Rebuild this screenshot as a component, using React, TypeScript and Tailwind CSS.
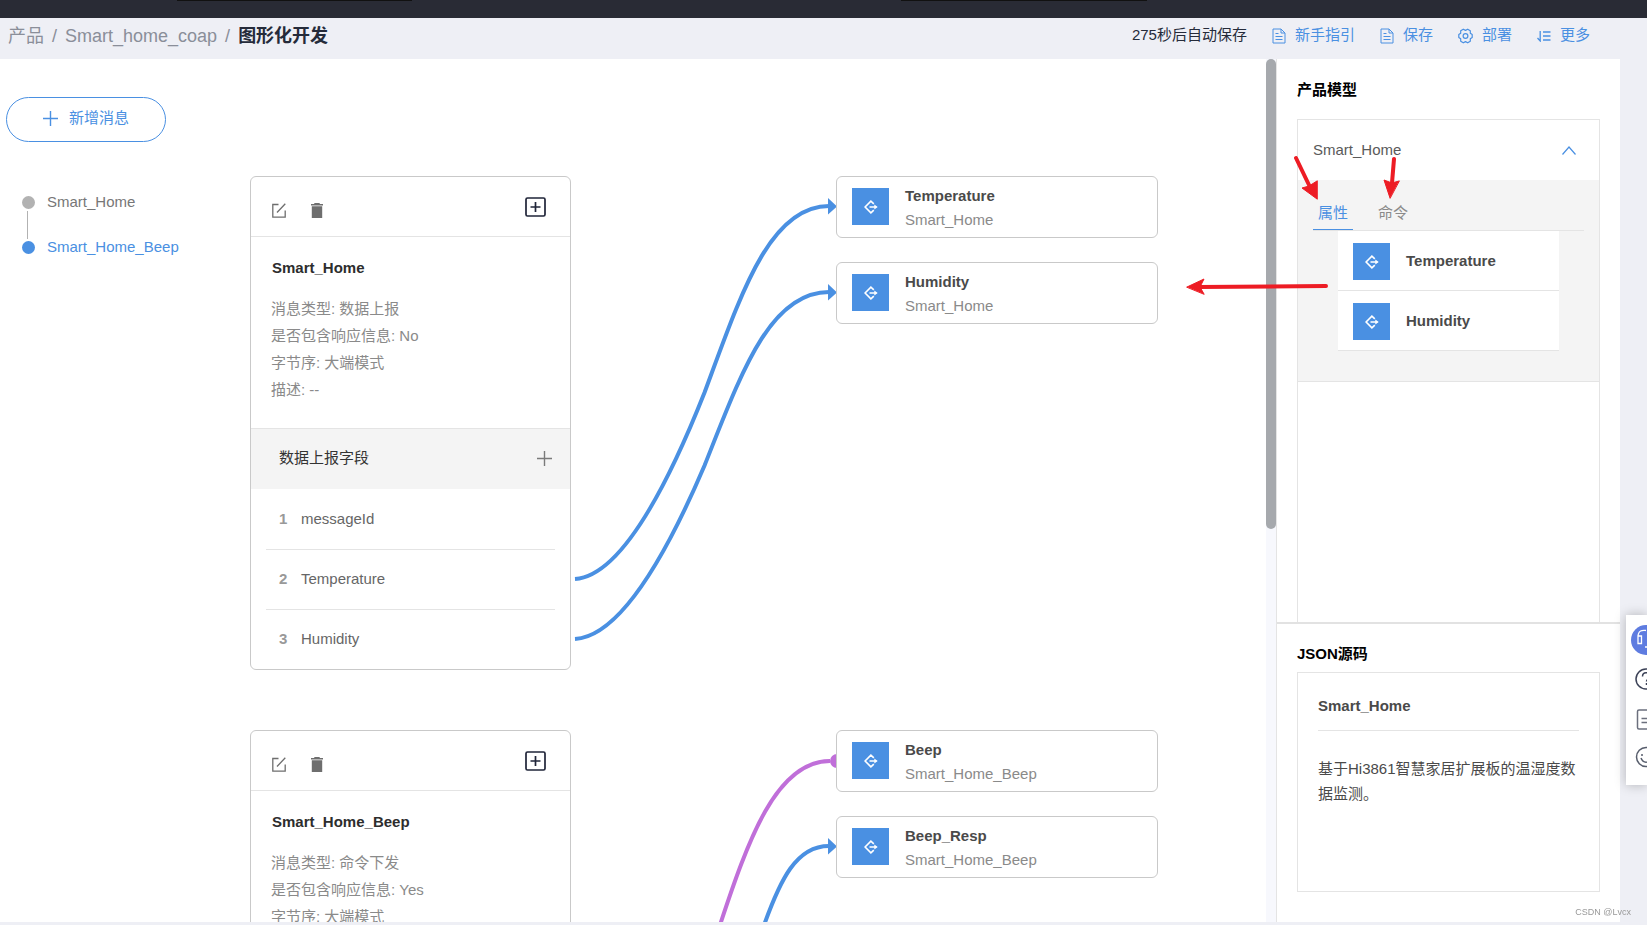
import { useState } from "react";

type Point = { x: number; y: number };

type Card = {
    name: string;
    pos: Point;
    info: string[];
    section?: string;
    fields?: string[];
};

const actions = [
    { name: "新手指引", icon: <DocIcon /> },
    { name: "保存", icon: <DocIcon /> },
    { name: "部署", icon: <GearIcon /> },
    { name: "更多", icon: <SortIcon /> },
];

const messages = ["Smart_Home", "Smart_Home_Beep"];

const cards: Card[] = [
    {
        name: "Smart_Home",
        pos: { x: 250, y: 117 },
        info: ["消息类型: 数据上报", "是否包含响应信息: No", "字节序: 大端模式", "描述: --"],
        section: "数据上报字段",
        fields: ["messageId", "Temperature", "Humidity"],
    },
    {
        name: "Smart_Home_Beep",
        pos: { x: 250, y: 671 },
        info: ["消息类型: 命令下发", "是否包含响应信息: Yes", "字节序: 大端模式"],
    },
];

const targets = [
    { name: "Temperature", service: "Smart_Home", pos: { x: 836, y: 117 } },
    { name: "Humidity", service: "Smart_Home", pos: { x: 836, y: 203 } },
    { name: "Beep", service: "Smart_Home_Beep", pos: { x: 836, y: 671 } },
    { name: "Beep_Resp", service: "Smart_Home_Beep", pos: { x: 836, y: 757 } },
];

const properties = ["Temperature", "Humidity"];

// S-shaped connector from a field to a property
const linkPath = (from: Point, to: Point) => {
    const dx = to.x - from.x;
    const dy = to.y - from.y;
    const mx = from.x + dx * 0.51;
    const my = from.y + dy * 0.5;
    return `M${from.x} ${from.y} Q${from.x + 57} ${from.y + dy * 0.01} ${mx} ${my} C${mx + 36} ${my + dy * 0.26} ${to.x - 60} ${to.y} ${to.x} ${to.y}`;
};

/* ============ ICONS ============ */
function DocIcon() {
    return (
        <svg width="14" height="16" viewBox="0 0 14 16" fill="none" stroke="currentColor">
            <path d="M9 1H1v14h12V5L9 1v4h4" />
            <path d="M3.500 5.500h3M3.500 8.500h7M3.500 11.500h7" />
        </svg>
    );
}

function GearIcon() {
    return (
        <svg width="15" height="16" viewBox="0 0 15 16" fill="none" stroke="currentColor" strokeWidth="1.2">
            <path d="M5.3 1.2 7.5 2.4 9.7 1.2 12.3 2.8V5.2L14.2 6.6V9.4L12.3 10.8V13.2L9.7 14.8 7.5 13.6 5.3 14.8 2.7 13.2V10.8L.8 9.4V6.6L2.7 5.2V2.8Z" strokeLinejoin="round" />
            <circle cx="7.5" cy="8" r="2.4" />
        </svg>
    );
}

function SortIcon() {
    return (
        <svg width="14" height="12" viewBox="0 0 14 12" fill="none" stroke="currentColor" strokeWidth="1.3">
            <path d="M3.2 1v10L.5 8M6 2h7.5M6 6h7.5M6 10h7.5" />
        </svg>
    );
}

function PlusIcon() {
    return (
        <svg width="15" height="15" viewBox="0 0 15 15" fill="none" stroke="currentColor" strokeWidth="1.4">
            <path d="M7.5 0v15M0 7.5h15" />
        </svg>
    );
}

function PropertyIcon() {
    return (
        <span className="flex size-[37px] shrink-0 items-center justify-center bg-[#4a90e2] text-white">
            <svg width="14" height="14" viewBox="0 0 14 14" fill="none" stroke="currentColor" strokeWidth="1.6">
                <path d="M9.8 3.8 6.9 1.1 1.1 7l5.8 5.9 2.9-2.7M5.5 7h7" />
                <path d="M10.3 4.4 13.7 7l-3.4 2.6z" fill="currentColor" stroke="none" />
            </svg>
        </span>
    );
}

/* ============ CANVAS NODES ============ */
function MessageCard({ card }: { card: Card }) {
    return (
        <section
            className="absolute min-h-[494px] w-[321px] rounded-md border border-[#c9c9c9] bg-white"
            style={{ left: card.pos.x, top: card.pos.y }}
        >
            <div className="flex h-[60px] items-center border-b border-[#e4e4e4] pr-6 pl-[21px] text-[#6e6e6e]">
                <button aria-label="编辑" className="mt-2">
                    <svg width="14" height="15" viewBox="0 0 14 15" fill="none" stroke="currentColor" strokeWidth="1.3">
                        <path d="M6.5 1.5H.8v12.7h12.4V7.5M5 9.5l8.3-8.7" />
                    </svg>
                </button>
                <button aria-label="删除" className="mt-2 ml-[25px]">
                    <svg width="12" height="15" viewBox="0 0 12 15" fill="currentColor">
                        <path d="M3.3 0h5.4v1H12v1.6H0V1h3.3zM.8 3.2h10.4V15H.8z" />
                    </svg>
                </button>
                <button aria-label="添加" className="ml-auto text-[#1f2438]">
                    <svg width="21" height="20" viewBox="0 0 21 20" fill="none" stroke="currentColor" strokeWidth="1.7">
                        <rect x="1" y="1" width="19" height="18" rx="1.5" />
                        <path d="M10.5 5v10M5.5 10h10" />
                    </svg>
                </button>
            </div>

            <div className="px-5 pt-[21px] pb-[25px]">
                <h2 className="pl-px leading-5 font-bold text-[#2d2d2d]">{card.name}</h2>
                <div className="mt-[17px] leading-[27px] text-[#8a8a8a]">
                    {card.info.map((line) => (
                        <p key={line}>{line}</p>
                    ))}
                </div>
            </div>

            {card.section && (
                <div className="flex h-[61px] items-center justify-between border-t border-[#e4e4e4] bg-[#f4f4f4] pr-[18px] pb-px pl-7">
                    <h3 className="text-[#333]">{card.section}</h3>
                    <button aria-label="添加字段" className="text-[#7a7a7a]">
                        <PlusIcon />
                    </button>
                </div>
            )}

            {card.fields && (
                <ol className="px-[15px]">
                    {card.fields.map((field, i) => (
                        <li
                            key={field}
                            className="flex h-[60px] items-center border-t border-[#e4e4e4] pl-[13px] text-[#666] first:border-transparent"
                        >
                            <b className="w-[22px] text-[#999]">{i + 1}</b>
                            {field}
                        </li>
                    ))}
                </ol>
            )}
        </section>
    );
}

function TargetCard({ target }: { target: (typeof targets)[number] }) {
    return (
        <div
            className="absolute flex h-[62px] w-[322px] items-center gap-4 rounded-md border border-[#c9c9c9] bg-white px-[15px] pb-px"
            style={{ left: target.pos.x, top: target.pos.y }}
        >
            <PropertyIcon />
            <div className="pt-0.5 leading-6">
                <p className="font-bold text-[#4a4a4a]">{target.name}</p>
                <p className="text-[#8a8a8a]">{target.service}</p>
            </div>
        </div>
    );
}

function Links() {
    return (
        <svg className="absolute inset-0 size-full" fill="none" strokeWidth="4">
            <g stroke="#4a90e2">
                <path d={linkPath({ x: 575, y: 520 }, { x: 829, y: 147 })} />
                <path d={linkPath({ x: 575, y: 580 }, { x: 829, y: 233 })} />
                <path d="M763 869C780 821 796 787 829 787" />
            </g>
            <path d="M719 869C748 781 776 702 830 702" stroke="#c06fd9" />
            <circle cx="837" cy="702" r="7" fill="#c06fd9" />
            <path d="M828 139l9 8.500-9 8zM828 225l9 8.500-9 8zM828 779l9 8.500-9 8z" fill="#4a90e2" />
        </svg>
    );
}

/* ============ RIGHT PANEL ============ */
function ProductPanel() {
    const [tab, setTab] = useState("属性");

    return (
        <aside className="relative flex w-[344px] shrink-0 flex-col border-l border-[#e4e4e4] bg-white">
            <div className="flex min-h-0 flex-1 flex-col border-b-2 border-[#e2e2e2] px-5 pt-[21px]">
                <h2 className="leading-5 font-bold text-black">产品模型</h2>
                <div className="mt-[19px] flex-1 border border-b-0 border-[#e4e4e4]">
                    <button className="flex h-[60px] w-full items-center justify-between pr-[23px] pl-[15px] text-[#5a5a5a]">
                        Smart_Home
                        <svg width="14" height="9" viewBox="0 0 14 9" fill="none" stroke="#4a90e2" strokeWidth="1.2">
                            <path d="M.5 8.500 7 1l6.500 7.500" />
                        </svg>
                    </button>
                    <div className="border-b border-[#e4e4e4] bg-[#f4f4f4] pt-4 pb-[30px]">
                        <div className="mx-[15px] flex gap-5 border-b border-[#e4e4e4]">
                            {["属性", "命令"].map((name) => (
                                <button
                                    key={name}
                                    onClick={() => setTab(name)}
                                    className={
                                        tab === name
                                            ? "h-[34px] border-b border-[#4a90e2] px-[5px] pt-0.5 text-[#4a90e2]"
                                            : "h-[34px] border-b border-transparent px-[5px] pt-0.5 text-[#8a8a8a]"
                                    }
                                >
                                    {name}
                                </button>
                            ))}
                        </div>
                        <ul className="mx-10">
                            {properties.map((name) => (
                                <li
                                    key={name}
                                    className="flex h-[60px] items-center gap-4 border-b border-[#e4e4e4] bg-white px-[15px] pt-0.5 font-bold text-[#4a4a4a]"
                                >
                                    <PropertyIcon />
                                    {name}
                                </li>
                            ))}
                        </ul>
                    </div>
                </div>
            </div>

            <div className="px-5 pt-5 pb-[30px]">
                <h2 className="leading-5 font-bold text-black">JSON源码</h2>
                <div className="mt-2 h-[220px] border border-[#e4e4e4] px-5">
                    <h3 className="border-b border-[#e4e4e4] pt-[23px] pb-[14px] leading-5 font-bold text-[#4a4a4a]">
                        Smart_Home
                    </h3>
                    <p className="mt-[25px] leading-[25px] text-[#4a4a4a]">
                        基于Hi3861智慧家居扩展板的温湿度数据监测。
                    </p>
                </div>
            </div>

            {/* Hint arrows */}
            <svg
                className="pointer-events-none absolute top-0 -left-[97px]"
                width="240"
                height="250"
                viewBox="-96 0 240 250"
                stroke="#ed1c24"
                strokeWidth="4"
                strokeLinecap="round"
            >
                <path d="M20 99l13 27M118 100l-2 24M50 227l-128 1" />
                <path
                    d="M41 140l-15-11 7-2 8-5zM114 139l-6-18 8 3 7-2zM-89 228l17-8-4 8 4 7z"
                    fill="#ed1c24"
                    strokeWidth="1"
                />
            </svg>
        </aside>
    );
}

function HelpDock() {
    return (
        <div className="fixed top-[615px] right-0 h-[170px] w-[21px] bg-white shadow-[0_0_12px_rgba(0,0,0,0.25)]">
            <svg width="21" height="170" viewBox="0 0 21 170" fill="none" stroke="#3c4257" strokeWidth="1.5">
                <circle cx="20" cy="25" r="15" fill="#5e7ce0" stroke="none" />
                <path d="M12 22c0-8 6-6.500 8-6.500M12 21v7.500h3.500V21zM19 32h4" stroke="#fff" strokeWidth="1.3" />
                <circle cx="20" cy="64" r="10" />
                <path d="M16.500 61.500c0-5 7-5 7 0 0 2.500-3 2.500-3 5M20.500 68v2" />
                <rect x="11.500" y="95" width="18" height="19" rx="1.500" stroke="#6b6f7d" />
                <path d="M15.500 103.500h10M15.500 107.500h10" stroke="#6b6f7d" />
                <circle cx="20" cy="142" r="9.500" stroke="#575d6c" />
                <path d="M15 143c2 5.500 8 5.500 10 0M16 139v2" stroke="#575d6c" />
            </svg>
        </div>
    );
}

const App = () => {
    const [active, setActive] = useState("Smart_Home_Beep");

    return (
        <div className="flex h-screen flex-col overflow-hidden bg-[#eeeff5] pb-[3px] font-['Liberation_Sans','Noto_Sans_CJK_SC',sans-serif] text-[15px]">
            <div className="flex h-[18px] shrink-0 bg-[#292b35]">
                <div className="ml-[177px] h-px w-[235px] bg-[#111]" />
                <div className="ml-[489px] h-px w-[246px] bg-[#111]" />
            </div>

            {/* ============ HEADER ============ */}
            <header className="flex h-[41px] shrink-0 items-center justify-between pr-[57px] pb-1.5 pl-2">
                <nav className="flex items-center gap-2 text-lg text-[#8a8e99]">
                    <a href="#">产品</a>
                    <span>/</span>
                    <a href="#">Smart_home_coap</a>
                    <span>/</span>
                    <b className="text-[#252b3a]">图形化开发</b>
                </nav>
                <div className="flex items-center gap-[25px] text-[#4a90e2]">
                    <span className="text-[#252b3a]">275秒后自动保存</span>
                    {actions.map((item) => (
                        <button key={item.name} className="flex items-center gap-[9px]">
                            {item.icon}
                            {item.name}
                        </button>
                    ))}
                </div>
            </header>

            {/* ============ WORKSPACE ============ */}
            <div className="mr-[27px] flex min-h-0 flex-1">
                <main className="relative min-w-0 flex-1 overflow-hidden bg-white pt-[38px] pl-1.5">
                    <button className="flex h-[45px] w-[160px] items-center justify-center gap-[11px] rounded-full border border-[#4a90e2] pb-0.5 text-[#4a90e2]">
                        <PlusIcon />
                        新增消息
                    </button>

                    <ul className="mt-[55px] pl-4">
                        {messages.map((name, i) => (
                            <li key={name}>
                                {i > 0 && <div className="my-[3px] ml-[5px] h-7 w-px bg-[#b2b2b2]" />}
                                <button
                                    onClick={() => setActive(name)}
                                    className={
                                        active === name
                                            ? "flex h-[11px] items-center gap-3 text-[#4a90e2]"
                                            : "flex h-[11px] items-center gap-3 text-[#777]"
                                    }
                                >
                                    <span
                                        className={
                                            active === name
                                                ? "size-[13px] rounded-full bg-[#4a90e2]"
                                                : "size-[13px] rounded-full bg-[#b2b2b2]"
                                        }
                                    />
                                    {name}
                                </button>
                            </li>
                        ))}
                    </ul>

                    <Links />
                    {cards.map((card) => (
                        <MessageCard key={card.name} card={card} />
                    ))}
                    {targets.map((target) => (
                        <TargetCard key={target.name} target={target} />
                    ))}
                </main>

                <div className="w-[10px] shrink-0 bg-[#f7f8fd]">
                    <div className="h-[470px] rounded-full bg-[#a6a9ad]" />
                </div>

                <ProductPanel />
            </div>

            <HelpDock />
            <p className="fixed right-4 bottom-[6px] text-[9px] leading-[14px] text-[#999]">CSDN @Lvcx</p>
        </div>
    );
};

export default App;
